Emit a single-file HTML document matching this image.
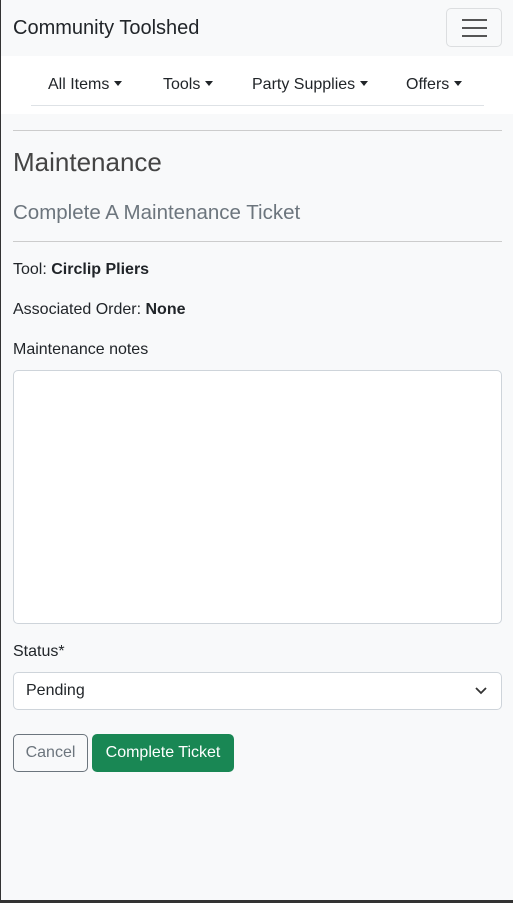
<!DOCTYPE html>
<html><head><style>
*{box-sizing:border-box;margin:0;padding:0}
body{width:513px;height:903px;background:#f8f9fa;font-family:"Liberation Sans",sans-serif;color:#212529;position:relative;overflow:hidden;font-size:16px}
.a{position:absolute}
.c{display:inline-block;width:0;height:0;border-left:4px solid transparent;border-right:4px solid transparent;border-top:5px solid #212529;vertical-align:3px;margin-left:5px}
</style></head><body>
<div class="a" style="left:0;top:0;width:1px;height:903px;background:#333;z-index:5"></div>
<div class="a" style="left:0;top:900px;width:513px;height:3px;background:#333;z-index:5"></div>
<div class="a" style="left:13px;top:16px;font-size:20px;line-height:24px">Community Toolshed</div>
<div class="a" style="left:446px;top:8px;width:56px;height:39px;border:1px solid #dcdee0;border-radius:5px">
<div class="a" style="left:15px;top:10px;width:25px;height:2px;background:#555"></div>
<div class="a" style="left:15px;top:18px;width:25px;height:2px;background:#555"></div>
<div class="a" style="left:15px;top:26px;width:25px;height:2px;background:#555"></div>
</div>
<div class="a" style="left:1px;top:56px;width:512px;height:58px;background:#fff"></div>
<div class="a" style="left:31px;top:105px;width:453px;height:1px;background:#dee2e6"></div>
<div class="a" style="left:48px;top:75px;line-height:20px;white-space:nowrap">All Items<span class="c"></span></div>
<div class="a" style="left:163px;top:75px;line-height:20px;white-space:nowrap">Tools<span class="c"></span></div>
<div class="a" style="left:252px;top:75px;line-height:20px;white-space:nowrap">Party Supplies<span class="c"></span></div>
<div class="a" style="left:406px;top:75px;line-height:20px;white-space:nowrap">Offers<span class="c"></span></div>
<div class="a" style="left:13px;top:130px;width:489px;height:1px;background:#ccc"></div>
<div class="a" style="left:13px;top:147px;font-size:26px;line-height:30px;color:#444">Maintenance</div>
<div class="a" style="left:13px;top:201px;font-size:20.5px;line-height:24px;color:#6c757d">Complete A Maintenance Ticket</div>
<div class="a" style="left:13px;top:241px;width:489px;height:1px;background:#ccc"></div>
<div class="a" style="left:13px;top:260px;line-height:20px">Tool: <b>Circlip Pliers</b></div>
<div class="a" style="left:13px;top:300px;line-height:20px">Associated Order: <b>None</b></div>
<div class="a" style="left:13px;top:340px;line-height:20px">Maintenance notes</div>
<div class="a" style="left:13px;top:370px;width:489px;height:254px;background:#fff;border:1px solid #ced4da;border-radius:5px"></div>
<div class="a" style="left:13px;top:642px;line-height:20px">Status*</div>
<div class="a" style="left:13px;top:672px;width:489px;height:38px;background:#fff;border:1px solid #ced4da;border-radius:5px"></div>
<div class="a" style="left:26px;top:681px;line-height:20px">Pending</div>
<svg class="a" style="left:474px;top:685px" width="14" height="12" viewBox="0 0 14 12"><path d="M2 3l5 5 5-5" fill="none" stroke="#333" stroke-width="1.8"/></svg>
<div class="a" style="left:13px;top:734px;width:75px;height:38px;border:1px solid #6c757d;border-radius:5px;color:#6c757d;text-align:center;line-height:36px">Cancel</div>
<div class="a" style="left:92px;top:734px;width:142px;height:38px;background:#198754;border-radius:5px;color:#fff;text-align:center;line-height:38px">Complete Ticket</div>
</body></html>
